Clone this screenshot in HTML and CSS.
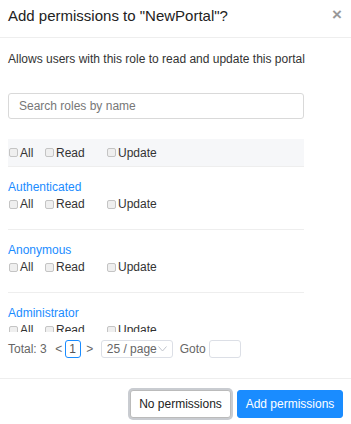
FILE: index.html
```html
<!DOCTYPE html>
<html>
<head>
<meta charset="utf-8">
<link rel="stylesheet" href="styles.css">
</head>
<body>
<div class="dialog">
  <div class="dlg-head">
    <span class="title">Add permissions to "NewPortal"?</span>
    <span class="close">×</span>
  </div>
  <div class="dlg-body">
    <p class="desc">Allows users with this role to read and update this portal</p>
    <input class="search" type="text" placeholder="Search roles by name">
    <div class="list">
      <div class="list-head">
        <div class="checks">
          <label class="chk c-all"><span class="box"></span>All</label>
          <label class="chk c-read"><span class="box"></span>Read</label>
          <label class="chk"><span class="box"></span>Update</label>
        </div>
      </div>
      <div class="role">
        <div class="role-name">Authenticated</div>
        <div class="checks">
          <label class="chk c-all"><span class="box"></span>All</label>
          <label class="chk c-read"><span class="box"></span>Read</label>
          <label class="chk"><span class="box"></span>Update</label>
        </div>
      </div>
      <div class="role">
        <div class="role-name">Anonymous</div>
        <div class="checks">
          <label class="chk c-all"><span class="box"></span>All</label>
          <label class="chk c-read"><span class="box"></span>Read</label>
          <label class="chk"><span class="box"></span>Update</label>
        </div>
      </div>
      <div class="role">
        <div class="role-name">Administrator</div>
        <div class="checks">
          <label class="chk c-all"><span class="box"></span>All</label>
          <label class="chk c-read"><span class="box"></span>Read</label>
          <label class="chk"><span class="box"></span>Update</label>
        </div>
      </div>
    </div>
    <div class="pager">
      <span class="total">Total: 3</span>
      <span class="arrow">&lt;</span>
      <span class="page">1</span>
      <span class="arrow">&gt;</span>
      <span class="size"><span>25 / page</span>
        <svg width="9" height="6" viewBox="0 0 9 6"><path d="M0.5 0.5 L4.5 5 L8.5 0.5" fill="none" stroke="#c0c4cc" stroke-width="1"/></svg>
      </span>
      <span class="goto">Goto</span>
      <span class="goto-input"></span>
    </div>
  </div>
  <div class="dlg-foot">
    <button class="btn btn-default">No permissions</button>
    <button class="btn btn-primary">Add permissions</button>
  </div>
</div>
</body>
</html>
```
FILE: styles.css
```css
html, body {
  margin: 0;
  padding: 0;
  background: #fff;
}
body {
  font-family: "Liberation Sans", Arial, sans-serif;
  color: #333;
  font-size: 12px;
}
.dialog {
  width: 351px;
  height: 424px;
  display: flex;
  flex-direction: column;
}
.dlg-head {
  height: 37px;
  border-bottom: 1px solid #eeeeee;
  display: flex;
  align-items: center;
  justify-content: space-between;
  padding: 0 9px 0 8px;
}
.title {
  font-size: 15px;
  color: #222;
  margin-top: -6px;
}
.close {
  font-size: 17px;
  font-weight: bold;
  color: #999;
  margin-top: -7px;
}
.dlg-body {
  padding: 0 47px 0 8px;
}
.desc {
  margin: 14px 0 0 0;
  line-height: 14px;
  font-size: 12px;
  color: #333;
  white-space: nowrap;
}
.search {
  display: block;
  box-sizing: border-box;
  width: 296px;
  height: 26px;
  margin-top: 27px;
  border: 1px solid #d9d9d9;
  border-radius: 3px;
  padding: 0 10px;
  font-family: inherit;
  font-size: 12px;
  outline: none;
}
.search::placeholder {
  color: #777;
}
.list {
  margin-top: 20px;
  width: 296px;
  height: 193px;
  overflow: hidden;
}
.list-head {
  height: 27px;
  background: #f6f7f9;
  border-bottom: 1px solid #eeeeee;
  display: flex;
  align-items: center;
}
.checks {
  display: flex;
  align-items: center;
  height: 16px;
}
.chk {
  display: flex;
  align-items: center;
  font-size: 12px;
  color: #333;
  line-height: 16px;
}
.c-all { width: 36px; }
.c-read { width: 62px; }
.box {
  box-sizing: border-box;
  width: 9px;
  height: 9px;
  border: 1px solid #c4c4c4;
  background: #efefef;
  border-radius: 2px;
  margin: 0 2px 0 1px;
}
.role {
  padding: 12px 0 17px 0;
  border-bottom: 1px solid #eeeeee;
}
.role-name {
  color: #1a8cff;
  font-size: 12px;
  line-height: 16px;
  margin-bottom: 1px;
}
.pager {
  display: flex;
  align-items: center;
  height: 19px;
  margin-top: 7px;
  color: #666;
  font-size: 12px;
  white-space: nowrap;
}
.total { margin-right: 7px; }
.arrow {
  color: #666;
  font-size: 12px;
  width: 10px;
  text-align: center;
}
.page {
  box-sizing: border-box;
  width: 16px;
  height: 18px;
  border: 1px solid #1a8cff;
  border-radius: 3px;
  display: flex;
  align-items: center;
  justify-content: center;
  margin: 0 4px 0 1px;
  color: #555;
}
.size {
  box-sizing: border-box;
  height: 18px;
  width: 72px;
  border: 1px solid #dcdfe6;
  border-radius: 3px;
  margin-left: 6px;
  display: flex;
  align-items: center;
  justify-content: space-between;
  padding: 0 5px 0 5px;
  color: #666;
  white-space: nowrap;
}
.goto { margin-left: 7px; }
.goto-input {
  box-sizing: border-box;
  width: 32px;
  height: 18px;
  border: 1px solid #dcdfe6;
  border-radius: 3px;
  margin-left: 3px;
}
.dlg-foot {
  margin-top: 20px;
  border-top: 1px solid #eeeeee;
  display: flex;
  justify-content: flex-end;
  align-items: center;
  padding: 11px 8px 0 0;
  gap: 6px;
}
.btn {
  box-sizing: border-box;
  font-family: inherit;
  font-size: 12px;
  height: 28px;
  border-radius: 3px;
  padding: 0;
  white-space: nowrap;
  cursor: pointer;
}
.btn-default {
  background: #fff;
  color: #222;
  border: 1px solid #bbb;
  box-shadow: 0 0 0 2px #c9ccd1;
  width: 101px;
}
.btn-primary {
  background: #1a8cff;
  color: #fff;
  border: 1px solid #1a8cff;
  width: 106px;
}
```
